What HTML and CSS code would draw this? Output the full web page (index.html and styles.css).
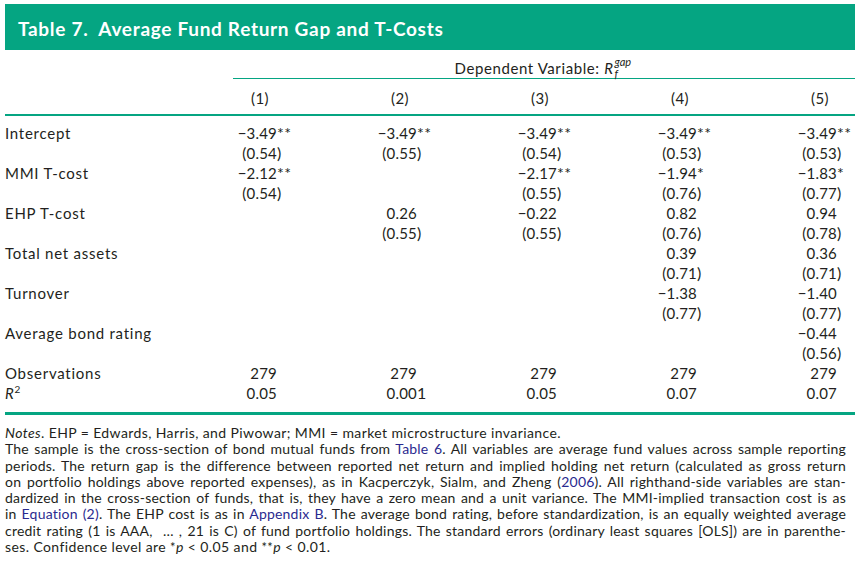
FILE: index.html
```html
<!DOCTYPE html>
<html>
<head>
<meta charset="utf-8">
<link rel="stylesheet" href="styles.css">
</head>
<body>
<div class="page">
  <div class="title">Table 7.&nbsp; Average Fund Return Gap and T-Costs</div>
  <div class="tbl">
    <div class="lab"></div>
    <div class="dv">Dependent Variable: <i>R</i><span class="ss"><span class="sp">gap</span><span class="sb">f</span></span></div>

    <div class="lab hdr"></div>
    <div class="hdr"><span class="h">(1)</span></div>
    <div class="hdr"><span class="h">(2)</span></div>
    <div class="hdr"><span class="h">(3)</span></div>
    <div class="hdr"><span class="h">(4)</span></div>
    <div class="hdr"><span class="h">(5)</span></div>

    <div class="lab first">Intercept</div>
    <div class="first"><span class="v">−3.49</span><span class="s">**</span></div>
    <div class="first"><span class="v">−3.49</span><span class="s">**</span></div>
    <div class="first"><span class="v">−3.49</span><span class="s">**</span></div>
    <div class="first"><span class="v">−3.49</span><span class="s">**</span></div>
    <div class="first"><span class="v">−3.49</span><span class="s">**</span></div>

    <div class="lab"></div>
    <div><span class="v">(0.54</span><span class="s">)</span></div>
    <div><span class="v">(0.55</span><span class="s">)</span></div>
    <div><span class="v">(0.54</span><span class="s">)</span></div>
    <div><span class="v">(0.53</span><span class="s">)</span></div>
    <div><span class="v">(0.53</span><span class="s">)</span></div>

    <div class="lab">MMI T-cost</div>
    <div><span class="v">−2.12</span><span class="s">**</span></div>
    <div></div>
    <div><span class="v">−2.17</span><span class="s">**</span></div>
    <div><span class="v">−1.94</span><span class="s">*</span></div>
    <div><span class="v">−1.83</span><span class="s">*</span></div>

    <div class="lab"></div>
    <div><span class="v">(0.54</span><span class="s">)</span></div>
    <div></div>
    <div><span class="v">(0.55</span><span class="s">)</span></div>
    <div><span class="v">(0.76</span><span class="s">)</span></div>
    <div><span class="v">(0.77</span><span class="s">)</span></div>

    <div class="lab">EHP T-cost</div>
    <div></div>
    <div><span class="v">0.26</span></div>
    <div><span class="v">−0.22</span></div>
    <div><span class="v">0.82</span></div>
    <div><span class="v">0.94</span></div>

    <div class="lab"></div>
    <div></div>
    <div><span class="v">(0.55</span><span class="s">)</span></div>
    <div><span class="v">(0.55</span><span class="s">)</span></div>
    <div><span class="v">(0.76</span><span class="s">)</span></div>
    <div><span class="v">(0.78</span><span class="s">)</span></div>

    <div class="lab">Total net assets</div>
    <div></div>
    <div></div>
    <div></div>
    <div><span class="v">0.39</span></div>
    <div><span class="v">0.36</span></div>

    <div class="lab"></div>
    <div></div>
    <div></div>
    <div></div>
    <div><span class="v">(0.71</span><span class="s">)</span></div>
    <div><span class="v">(0.71</span><span class="s">)</span></div>

    <div class="lab">Turnover</div>
    <div></div>
    <div></div>
    <div></div>
    <div><span class="v">−1.38</span></div>
    <div><span class="v">−1.40</span></div>

    <div class="lab"></div>
    <div></div>
    <div></div>
    <div></div>
    <div><span class="v">(0.77</span><span class="s">)</span></div>
    <div><span class="v">(0.77</span><span class="s">)</span></div>

    <div class="lab">Average bond rating</div>
    <div></div>
    <div></div>
    <div></div>
    <div></div>
    <div><span class="v">−0.44</span></div>

    <div class="lab"></div>
    <div></div>
    <div></div>
    <div></div>
    <div></div>
    <div><span class="v">(0.56</span><span class="s">)</span></div>

    <div class="lab">Observations</div>
    <div><span class="v">279</span></div>
    <div><span class="v">279</span></div>
    <div><span class="v">279</span></div>
    <div><span class="v">279</span></div>
    <div><span class="v">279</span></div>

    <div class="lab last"><i>R</i><sup class="sq">2</sup></div>
    <div class="last"><span class="v">0.05</span></div>
    <div class="last"><span class="v">0.00</span><span class="s">1</span></div>
    <div class="last"><span class="v">0.05</span></div>
    <div class="last"><span class="v">0.07</span></div>
    <div class="last"><span class="v">0.07</span></div>
  </div>

  <div class="notes">
    <div class="ln"><i>Notes</i>. EHP = Edwards, Harris, and Piwowar; MMI = market microstructure invariance.</div>
    <div class="ln j">The sample is the cross-section of bond mutual funds from <span class="lk">Table 6</span>. All variables are average fund values across sample reporting</div>
    <div class="ln j">periods. The return gap is the difference between reported net return and implied holding net return (calculated as gross return</div>
    <div class="ln j">on portfolio holdings above reported expenses), as in Kacperczyk, Sialm, and Zheng (<span class="lk">2006</span>). All righthand-side variables are stan-</div>
    <div class="ln j">dardized in the cross-section of funds, that is, they have a zero mean and a unit variance. The MMI-implied transaction cost is as</div>
    <div class="ln j">in <span class="lk">Equation (2)</span>. The EHP cost is as in <span class="lk">Appendix B</span>. The average bond rating, before standardization, is an equally weighted average</div>
    <div class="ln j">credit rating (1 is AAA, &nbsp;…&nbsp;, 21 is C) of fund portfolio holdings. The standard errors (ordinary least squares [OLS]) are in parenthe-</div>
    <div class="ln">ses. Confidence level are <span class="st">*</span><i>p</i> &lt; 0.05 and <span class="st">**</span><i>p</i> &lt; 0.01.</div>
  </div>
</div>
</body>
</html>
```

FILE: styles.css
```css
html, body {
  margin: 0;
  padding: 0;
  background: #ffffff;
}

body {
  font-family: Lato, "Open Sans", sans-serif;
  color: #231f20;
}

.page {
  width: 850px;
  padding: 4px 0 0 5px;
}

.title {
  height: 42px;
  padding: 4px 0 0 13px;
  background: #05a582;
  color: #ffffff;
  font-weight: 700;
  font-size: 19px;
  letter-spacing: 0.7px;
  line-height: 42px;
  white-space: nowrap;
}

.tbl {
  display: grid;
  grid-template-columns: 230px 140px 140px 140px 140px 60px;
  font-size: 15px;
  line-height: 20px;
}

.tbl > div {
  white-space: nowrap;
}

.lab {
  letter-spacing: 0.75px;
}

.dv {
  grid-column: 2 / 7;
  margin-left: -2px;
  padding: 8px 0 0 0;
  height: 20px;
  border-bottom: 1px solid #05a582;
  text-align: center;
  letter-spacing: 0.6px;
}

.ss {
  display: inline-block;
  position: relative;
  width: 20px;
  height: 10px;
}

.sp {
  position: absolute;
  left: 1px;
  top: -8px;
  font-size: 11px;
  font-style: italic;
  line-height: 11px;
  letter-spacing: 0;
}

.sb {
  position: absolute;
  left: 1px;
  top: 4px;
  font-size: 11px;
  font-style: italic;
  line-height: 11px;
}

.hdr {
  padding: 9px 0 6px 0;
  border-bottom: 2px solid #05a582;
  letter-spacing: 0.5px;
}

.h {
  display: inline-block;
  width: 50px;
  text-align: center;
}

.first {
  padding-top: 7px;
}

.last {
  padding-bottom: 9px;
  border-bottom: 3px solid #05a582;
}

.v {
  display: inline-block;
  width: 42px;
  text-align: right;
  letter-spacing: 0.2px;
}

.s {
  display: inline-block;
  font-size: 16px;
  letter-spacing: 0.5px;
}

.sq {
  font-size: 10px;
  line-height: 0;
  vertical-align: 6px;
}

.notes {
  margin-top: 10px;
  width: 841px;
  font-size: 14px;
  line-height: 16.3px;
  letter-spacing: 0.4px;
}

.ln {
  white-space: nowrap;
}

.ln.j {
  white-space: normal;
  text-align: justify;
  text-align-last: justify;
  letter-spacing: 0.2px;
}

.lk {
  color: #2a2a8f;
}

.st {
  font-size: 13px;
}
```
